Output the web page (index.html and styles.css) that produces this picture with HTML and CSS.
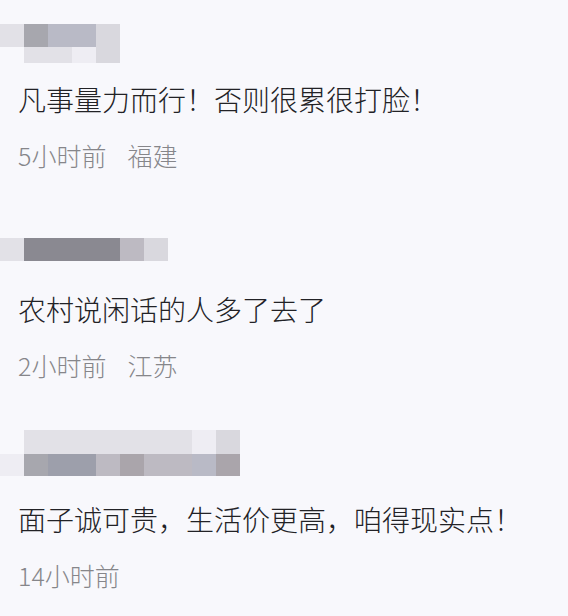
FILE: index.html
```html
<!DOCTYPE html>
<html lang="zh-CN">

<head>
  <meta charset="UTF-8">
  <meta name="viewport" content="width=device-width, initial-scale=1.0">
  <title>评论</title>
  <link rel="stylesheet" href="styles.css">
</head>

<body>

  <div class="comment c1">
    <!-- blurred user name -->
    <div class="mosaic m1">
      <span class="g1"></span><span class="g5"></span><span class="g3"></span><span class="g3"></span><span class="g2"></span>
      <span></span><span class="g1"></span><span class="g1"></span><span class="g0"></span><span class="g2"></span>
    </div>
    <p class="text">凡事量力而行！否则很累很打脸！</p>
    <div class="meta"><span>5小时前</span><span>福建</span></div>
  </div>

  <div class="comment c2">
    <div class="mosaic m2">
      <span class="g1"></span><span class="g7"></span><span class="g7"></span><span class="g7"></span><span class="g7"></span><span class="g4"></span><span class="g2"></span>
    </div>
    <p class="text">农村说闲话的人多了去了</p>
    <div class="meta"><span>2小时前</span><span>江苏</span></div>
  </div>

  <div class="comment c3">
    <div class="mosaic m3">
      <span></span><span class="g1"></span><span class="g1"></span><span class="g1"></span><span class="g1"></span><span class="g1"></span><span class="g1"></span><span class="g1"></span><span class="g0"></span><span class="g2"></span>
      <span class="g0"></span><span class="g5"></span><span class="g6"></span><span class="g6"></span><span class="g4"></span><span class="g8"></span><span class="g4"></span><span class="g4"></span><span class="g3"></span><span class="g8"></span>
    </div>
    <p class="text">面子诚可贵，生活价更高，咱得现实点！</p>
    <div class="meta"><span>14小时前</span></div>
  </div>

</body>

</html>
```

FILE: styles.css
```css
body {
  margin: 0;
  background-color: #f8f8fc;
  font-family: 'Noto Sans CJK SC', 'Noto Sans', sans-serif;
  color: #222226;
}

.comment {
  padding-left: 18px;
}

.mosaic {
  display: grid;
  margin-left: -18px;
  filter: blur(0.6px);
}

.mosaic span {
  display: block;
}

.m1 {
  margin-top: 24px;
  grid-template-columns: repeat(5, 24px);
  grid-template-rows: 23px 16px;
}

.m2 {
  margin-top: 67px;
  grid-template-columns: repeat(7, 24px);
  grid-template-rows: 23px;
}

.m3 {
  margin-top: 49px;
  grid-template-columns: repeat(10, 24px);
  grid-template-rows: 24px 22px;
}

/* mosaic tones */
.g0 { background: #eeedf3; }
.g1 { background: #e2e1e7; }
.g2 { background: #d9d8de; }
.g3 { background: #b9bac6; }
.g4 { background: #bdbac2; }
.g5 { background: #a7a7ae; }
.g6 { background: #9d9fab; }
.g7 { background: #8a8991; }
.g8 { background: #aaa5ab; }

.text {
  margin: 0;
  font-size: 28px;
  font-weight: 300;
  line-height: 36px;
}

.c1 .text { margin-top: 18px; }
.c2 .text { margin-top: 30px; }
.c3 .text { margin-top: 25px; }

.meta {
  margin-top: 22px;
  font-size: 25px;
  font-weight: 300;
  line-height: 32px;
  color: #86868a;
  display: flex;
  gap: 21px;
}
```
